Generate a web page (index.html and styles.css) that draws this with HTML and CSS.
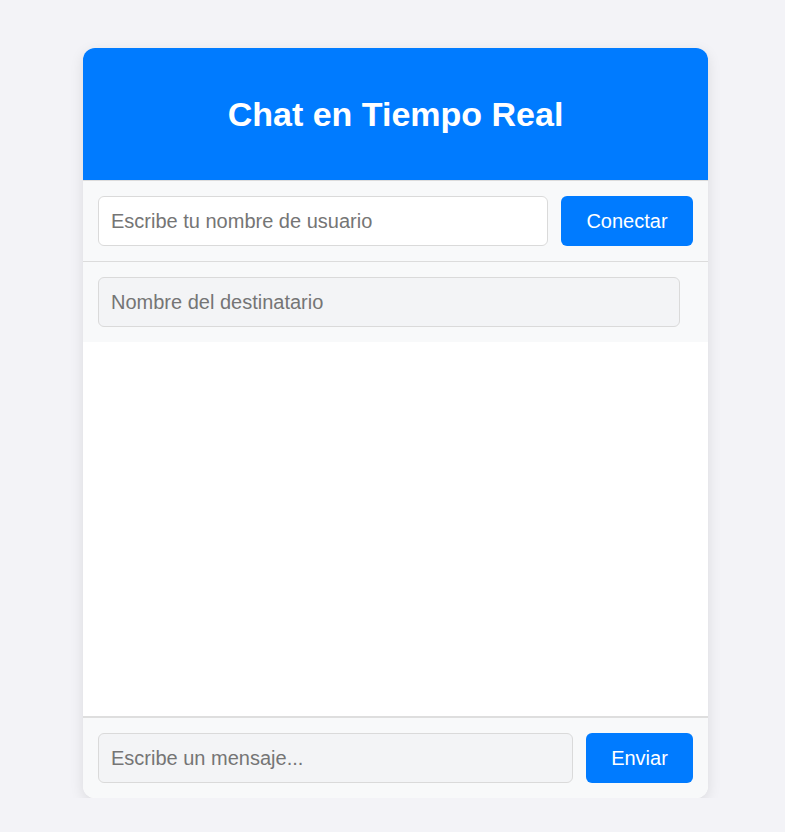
FILE: index.html
```html
<!DOCTYPE html>
<html lang="es">
<head>
<meta charset="utf-8">
<title>Chat en Tiempo Real</title>
<link rel="stylesheet" href="styles.css">
</head>
<body>
<div class="chat">
  <header class="chat-header">
    <h1>Chat en Tiempo Real</h1>
  </header>
  <div class="row login">
    <input class="field" type="text" placeholder="Escribe tu nombre de usuario">
    <button class="btn btn-connect">Conectar</button>
  </div>
  <div class="row recipient">
    <input class="field field-disabled field-recipient" type="text" placeholder="Nombre del destinatario" disabled>
  </div>
  <div class="messages"></div>
  <div class="row composer">
    <input class="field field-disabled" type="text" placeholder="Escribe un mensaje..." disabled>
    <button class="btn btn-send">Enviar</button>
  </div>
</div>
</body>
</html>
```

FILE: styles.css
```css
* { box-sizing: border-box; }
html, body { margin: 0; padding: 0; }
body {
  background: #f3f3f7;
  font-family: "Liberation Sans", Arial, sans-serif;
  padding: 48px 0 0 6px;
}
.chat {
  width: 625px;
  margin: 0 auto;
  height: 750px;
  background: #fff;
  border-radius: 12px;
  overflow: hidden;
  box-shadow: 0 4px 14px rgba(0, 0, 0, 0.1);
  display: flex;
  flex-direction: column;
}
.chat-header {
  background: #007bff;
  height: 133px;
  flex: 0 0 133px;
  display: flex;
  align-items: center;
  justify-content: center;
  border-bottom: 1px solid #dcdcdc;
}
.chat-header h1 {
  margin: 0;
  color: #fff;
  font-size: 34px;
  font-weight: bold;
}
.row {
  background: #f8f9fa;
  display: flex;
  align-items: center;
  gap: 13px;
  padding: 15px;
}
.login { border-bottom: 1px solid #dcdcdc; }
.field {
  flex: 1;
  height: 50px;
  border: 1px solid #dadada;
  border-radius: 6px;
  padding: 0 12px;
  font-family: inherit;
  font-size: 20px;
  color: #333;
  background: #fff;
  outline: none;
}
.field::placeholder { color: #757575; }
.field-disabled { background: #f3f4f6; }
.field-recipient { flex: 0 0 582px; }
.btn {
  height: 50px;
  border: none;
  border-radius: 6px;
  background: #007bff;
  color: #fff;
  font-family: inherit;
  font-size: 20px;
  cursor: pointer;
}
.btn-connect { width: 132px; }
.btn-send { width: 107px; }
.messages {
  flex: 1;
  background: #fff;
  border-bottom: 2px solid #dedede;
}
```
